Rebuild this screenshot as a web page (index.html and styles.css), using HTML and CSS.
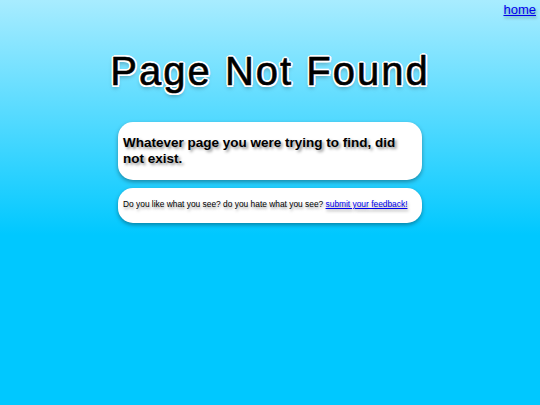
FILE: index.html
```html
<!DOCTYPE html>
<html>
<head>
<meta charset="utf-8">
<link rel="stylesheet" href="styles.css">
</head>
<body>
<div class="top"><a class="home" href="#">home</a></div>
<h1 class="title">Page Not Found</h1>
<div class="cards">
  <div class="card big">Whatever page you were trying to find, did not exist.</div>
  <div class="card small">Do you like what you see? do you hate what you see? <a href="#">submit your feedback!</a></div>
</div>
</body>
</html>
```
FILE: styles.css
```css
html, body { margin: 0; padding: 0; }
body {
  font-family: "Liberation Sans", Arial, sans-serif;
  background: linear-gradient(to bottom, #a8ecff 0px, #00c8ff 235px, #00c8ff 100%);
  background-color: #00c8ff;
  min-height: 405px;
}
a { color: #0000ee; }
.top { display: flex; justify-content: flex-end; padding: 2px 4px 0 0; height: 17px; }
.home { font-size: 13px; line-height: 15px; text-shadow: 1px 2px 3px rgba(0,0,0,0.35); }
.title {
  margin: 29px 0 0 0;
  text-align: center;
  font-size: 40px;
  font-weight: normal;
  letter-spacing: 2px;
  line-height: 46px;
  color: #000;
  -webkit-text-stroke: 0.6px #000;
  text-shadow: -2px 0 0 #fff, 2px 0 0 #fff, 0 -2px 0 #fff, 0 2px 0 #fff,
    -1.5px -1.5px 0 #fff, 1.5px -1.5px 0 #fff, -1.5px 1.5px 0 #fff, 1.5px 1.5px 0 #fff,
    0 3px 4px rgba(0,0,0,0.35);
}
.cards { width: 304px; margin: 28px auto 0; display: flex; flex-direction: column; gap: 8px; }
.card {
  background: #fff;
  border-radius: 15px;
  box-shadow: 0 2px 4px rgba(0,0,0,0.35);
  padding: 0 20px 0 5px;
}
.big {
  font-size: 13.5px;
  font-weight: bold;
  line-height: 16px;
  padding-top: 13px;
  padding-bottom: 13px;
  text-shadow: 2px 2px 3px rgba(0,0,0,0.45);
}
.small {
  font-size: 8.4px;
  line-height: 11px;
  padding-top: 11px;
  padding-bottom: 13px;
  padding-right: 5px;
  white-space: nowrap;
  text-shadow: 1px 2px 3px rgba(0,0,0,0.4);
}
```
